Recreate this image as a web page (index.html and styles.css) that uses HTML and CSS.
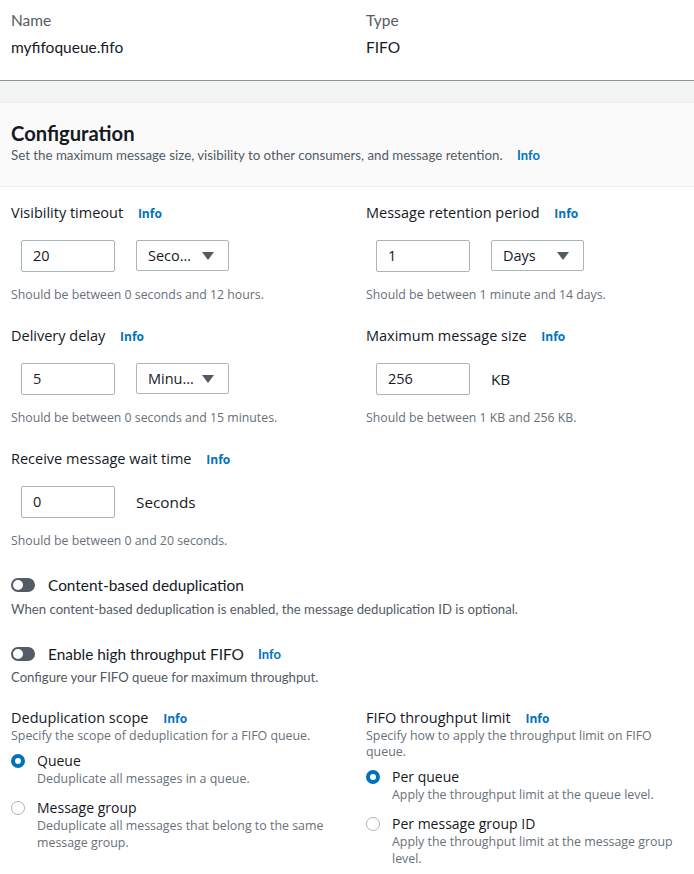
FILE: index.html
```html
<!DOCTYPE html>
<html lang="en">
<head>
<meta charset="utf-8">
<title>Configuration</title>
<link rel="stylesheet" href="styles.css">
</head>
<body>
<div class="summary">
  <div class="sum-col">
    <div class="sum-label">Name</div>
    <div class="sum-value">myfifoqueue.fifo</div>
  </div>
  <div class="sum-col">
    <div class="sum-label">Type</div>
    <div class="sum-value">FIFO</div>
  </div>
</div>
<div class="band"></div>
<section class="container">
  <header class="container-header">
    <h2 class="title">Configuration</h2>
    <p class="subtitle">Set the maximum message size, visibility to other consumers, and message retention. <a class="info info-head">Info</a></p>
  </header>
  <div class="container-body">
    <div class="grid">
      <div class="field">
        <div class="label">Visibility timeout <a class="info">Info</a></div>
        <div class="controls">
          <div class="input">20</div>
          <div class="select"><span>Seco…</span><span class="caret"></span></div>
        </div>
        <div class="help">Should be between 0 seconds and 12 hours.</div>
      </div>
      <div class="field">
        <div class="label">Message retention period <a class="info">Info</a></div>
        <div class="controls">
          <div class="input">1</div>
          <div class="select"><span>Days</span><span class="caret"></span></div>
        </div>
        <div class="help">Should be between 1 minute and 14 days.</div>
      </div>
      <div class="field">
        <div class="label">Delivery delay <a class="info">Info</a></div>
        <div class="controls">
          <div class="input">5</div>
          <div class="select"><span>Minu…</span><span class="caret"></span></div>
        </div>
        <div class="help">Should be between 0 seconds and 15 minutes.</div>
      </div>
      <div class="field">
        <div class="label">Maximum message size <a class="info">Info</a></div>
        <div class="controls">
          <div class="input">256</div>
          <div class="unit">KB</div>
        </div>
        <div class="help">Should be between 1 KB and 256 KB.</div>
      </div>
      <div class="field">
        <div class="label">Receive message wait time <a class="info">Info</a></div>
        <div class="controls">
          <div class="input">0</div>
          <div class="unit">Seconds</div>
        </div>
        <div class="help">Should be between 0 and 20 seconds.</div>
      </div>
    </div>

    <div class="toggle-field first">
      <div class="toggle-row"><span class="toggle"></span><span class="toggle-label">Content-based deduplication</span></div>
      <div class="toggle-desc">When content-based deduplication is enabled, the message deduplication ID is optional.</div>
    </div>
    <div class="toggle-field">
      <div class="toggle-row"><span class="toggle"></span><span class="toggle-label">Enable high throughput FIFO</span><a class="info info-toggle">Info</a></div>
      <div class="toggle-desc">Configure your FIFO queue for maximum throughput.</div>
    </div>

    <div class="grid radios-grid">
      <div class="radio-group">
        <div class="label">Deduplication scope <a class="info">Info</a></div>
        <div class="group-desc">Specify the scope of deduplication for a FIFO queue.</div>
        <div class="radio">
          <span class="dot checked"></span>
          <div class="radio-text">
            <div class="radio-label">Queue</div>
            <div class="radio-desc">Deduplicate all messages in a queue.</div>
          </div>
        </div>
        <div class="radio">
          <span class="dot"></span>
          <div class="radio-text">
            <div class="radio-label">Message group</div>
            <div class="radio-desc">Deduplicate all messages that belong to the same message group.</div>
          </div>
        </div>
      </div>
      <div class="radio-group">
        <div class="label">FIFO throughput limit <a class="info">Info</a></div>
        <div class="group-desc">Specify how to apply the throughput limit on FIFO queue.</div>
        <div class="radio">
          <span class="dot checked"></span>
          <div class="radio-text">
            <div class="radio-label">Per queue</div>
            <div class="radio-desc">Apply the throughput limit at the queue level.</div>
          </div>
        </div>
        <div class="radio">
          <span class="dot"></span>
          <div class="radio-text">
            <div class="radio-label">Per message group ID</div>
            <div class="radio-desc">Apply the throughput limit at the message group level.</div>
          </div>
        </div>
      </div>
    </div>
  </div>
</section>
</body>
</html>
```
FILE: styles.css
```css
* { box-sizing: border-box; }
html, body { margin: 0; padding: 0; background: #fff; }
body {
  font-family: "Open Sans", "Noto Sans", sans-serif;
  color: #16191f;
  width: 694px;
  overflow: hidden;
}

/* summary */
.summary {
  display: grid;
  grid-template-columns: 355px 1fr;
  padding: 10px 11px 0 11px;
  height: 81px;
  border-bottom: 1px solid #8d9696;
  font-family: Lato, "Open Sans", sans-serif;
}
.sum-label {
  font-size: 15.5px;
  line-height: 20px;
  color: #545b64;
}
.sum-value {
  margin-top: 7px;
  font-size: 15.5px;
  line-height: 20px;
  color: #16191f;
}
.band {
  height: 21px;
  background: #f2f3f3;
}

/* container */
.container {
  border-top: 1px solid #eaeded;
}
.container-header {
  background: #fafafa;
  border-bottom: 1px solid #eaeded;
  padding: 18px 11px 0 11px;
  height: 84px;
  font-family: Lato, "Open Sans", sans-serif;
}
.title {
  margin: 0;
  font-size: 20.2px;
  line-height: 24px;
  font-weight: 700;
  color: #16191f;
}
.subtitle {
  margin: 0;
  font-size: 13.3px;
  line-height: 20px;
  color: #545b64;
}
.info {
  color: #0073bb;
  font-weight: 700;
  font-size: 12px;
  margin-left: 11px;
}
.info-head { margin-left: 11px; font-size: 13px; }

.container-body {
  padding: 15.5px 11px 20px 11px;
}
.grid {
  display: grid;
  grid-template-columns: 355px 1fr;
}
.field {
  padding-bottom: 21.5px;
}
.label {
  font-size: 14.5px;
  line-height: 20px;
  color: #16191f;
}
.label .info { margin-left: 11px; }
.controls {
  display: flex;
  align-items: center;
  margin-top: 16px;
  padding-left: 10px;
  gap: 21px;
  height: 32px;
}
.input {
  width: 94px;
  height: 32px;
  border: 1px solid #aab7b8;
  border-radius: 2px;
  padding: 0 11px;
  font-size: 14.5px;
  line-height: 30px;
  color: #16191f;
}
.select {
  width: 93px;
  height: 31px;
  border: 1px solid #aab7b8;
  border-radius: 2px;
  padding: 0 14px 0 11px;
  font-size: 14.5px;
  line-height: 29px;
  color: #16191f;
  display: flex;
  align-items: center;
  justify-content: space-between;
}
.caret {
  width: 0;
  height: 0;
  border-left: 6px solid transparent;
  border-right: 6px solid transparent;
  border-top: 8px solid #545b64;
}
.unit {
  font-size: 15.3px;
  color: #16191f;
}
.help {
  margin-top: 14.5px;
  font-size: 12.3px;
  line-height: 18px;
  color: #687078;
}

/* toggles */
.toggle-field {
  font-family: Lato, "Open Sans", sans-serif;
}
.toggle-field.first { margin-top: 3.5px; }
.toggle-field + .toggle-field { margin-top: 26px; }
.toggle-row {
  display: flex;
  align-items: center;
  height: 20px;
}
.toggle {
  width: 24px;
  height: 14px;
  border-radius: 7px;
  background: #545b64;
  position: relative;
  margin-right: 13px;
  flex: none;
}
.toggle::after {
  content: "";
  position: absolute;
  left: 2px;
  top: 2px;
  width: 10px;
  height: 10px;
  border-radius: 50%;
  background: #fff;
}
.toggle-label {
  font-size: 15.4px;
  color: #16191f;
}
.info-toggle { margin-left: 14px; font-size: 13px; }
.toggle-desc {
  margin-top: 4.5px;
  font-size: 13.15px;
  line-height: 18px;
  color: #545b64;
}

/* radios */
.radios-grid {
  margin-top: 22px;
}
.radio-group .label { line-height: 20px; }
.group-desc {
  font-size: 12.4px;
  line-height: 16px;
  color: #687078;
  margin-top: -1px;
  padding-right: 0;
}
.radio {
  display: flex;
  align-items: flex-start;
  margin-top: 8px;
}
.radio + .radio { margin-top: 12px; }
.dot {
  flex: none;
  width: 14px;
  height: 14px;
  border-radius: 50%;
  border: 1px solid #aab7b8;
  margin-top: 2px;
  margin-right: 12px;
  background: #fff;
}
.dot.checked {
  border: 4px solid #0073bb;
}
.radio-label {
  font-size: 14px;
  line-height: 18px;
  color: #16191f;
}
.radio-desc {
  font-size: 12.4px;
  line-height: 17px;
  color: #687078;
  padding-right: 0;
}
```
